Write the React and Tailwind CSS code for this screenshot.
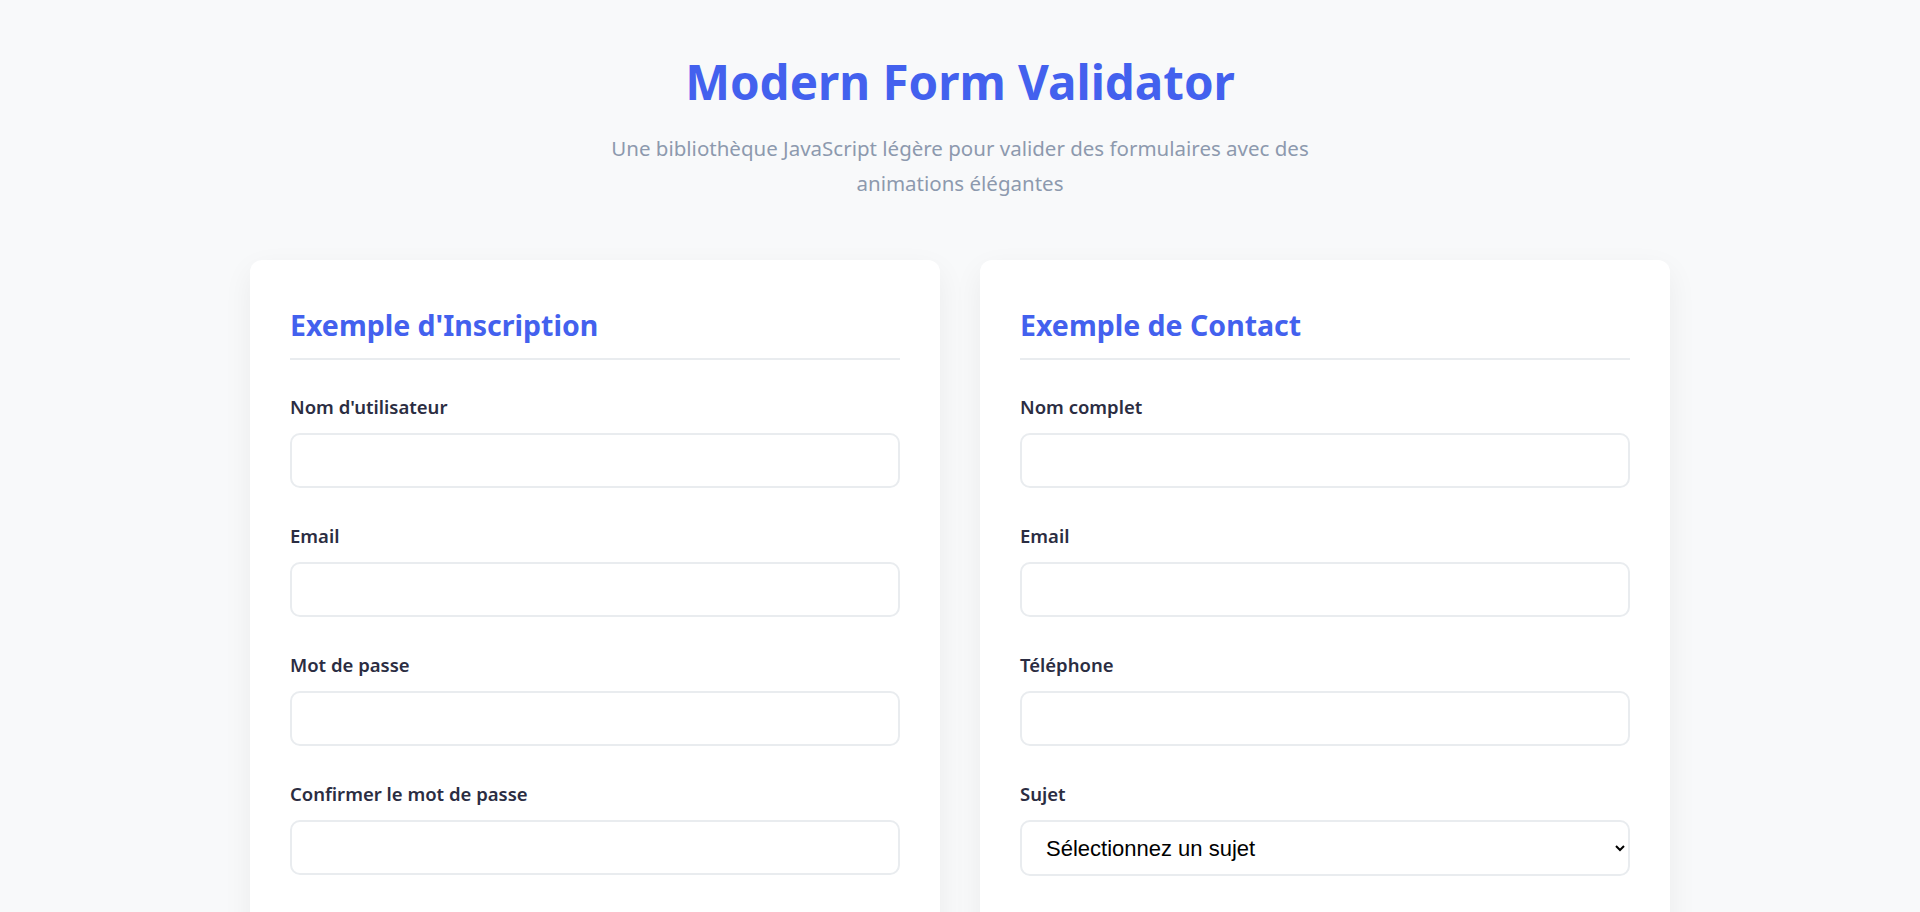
import { useState } from 'react'

const signupFields = [
  { id: 'username', label: "Nom d'utilisateur", type: 'text' },
  { id: 'email', label: 'Email', type: 'email' },
  { id: 'password', label: 'Mot de passe', type: 'password' },
  { id: 'confirm', label: 'Confirmer le mot de passe', type: 'password' },
  { id: 'age', label: 'Âge', type: 'number' },
]

const contactFields = [
  { id: 'fullname', label: 'Nom complet', type: 'text' },
  { id: 'contact-email', label: 'Email', type: 'email' },
  { id: 'phone', label: 'Téléphone', type: 'tel' },
]

function Field({ field, value, onChange }) {
  return (
    <div className="mb-[34px]">
      <label htmlFor={field.id} className="mb-3 block text-[18.5px] font-semibold leading-[28px] text-[#2b2d42]">
        {field.label}
      </label>
      <input
        id={field.id}
        type={field.type}
        value={value}
        onChange={(event) => onChange(field.id, event.target.value)}
        className="block h-[55px] w-full rounded-[10px] border-2 border-[#e9ecef] bg-white px-4 text-[16px] text-[#2b2d42] outline-none"
      />
    </div>
  )
}

function Card({ title, children }) {
  return (
    <section className="rounded-xl bg-white p-10 shadow-[0_10px_30px_rgba(0,0,0,0.06)]">
      <h2 className="mb-[33px] border-b-2 border-[#e9ecef] pb-2 text-[28.5px] font-bold leading-[50px] text-[#4361ee]">
        {title}
      </h2>
      {children}
    </section>
  )
}

export default function App() {
  const [values, setValues] = useState({})

  const updateValue = (id, value) => {
    setValues((prev) => ({ ...prev, [id]: value }))
  }

  return (
    <div className="min-h-screen bg-[#f8f9fa] pb-16 font-['Noto_Sans','Open_Sans',sans-serif]">
      <header className="pt-[52px] text-center">
        <h1 className="text-[47.5px] font-bold leading-[60px] text-[#4361ee]">Modern Form Validator</h1>
        <p className="mt-[19px] text-[20.5px] leading-[35px] text-[#8d99ae]">
          Une bibliothèque JavaScript légère pour valider des formulaires avec des
          <br />
          animations élégantes
        </p>
      </header>

      <main className="mx-auto mt-[59px] grid w-[1420px] grid-cols-2 items-start gap-10">
        <Card title="Exemple d'Inscription">
          <form onSubmit={(event) => event.preventDefault()}>
            {signupFields.map((field) => (
              <Field key={field.id} field={field} value={values[field.id] || ''} onChange={updateValue} />
            ))}
            <button
              type="submit"
              className="h-[55px] w-full rounded-[10px] bg-[#4361ee] text-[17px] font-semibold text-white"
            >
              S'inscrire
            </button>
          </form>
        </Card>

        <Card title="Exemple de Contact">
          <form onSubmit={(event) => event.preventDefault()}>
            {contactFields.map((field) => (
              <Field key={field.id} field={field} value={values[field.id] || ''} onChange={updateValue} />
            ))}
            <div className="mb-[34px]">
              <label htmlFor="subject" className="mb-3 block text-[18.5px] font-semibold leading-[28px] text-[#2b2d42]">
                Sujet
              </label>
              <select
                id="subject"
                value={values.subject || ''}
                onChange={(event) => updateValue('subject', event.target.value)}
                className="block h-[56px] w-full rounded-[10px] border-2 border-[#e9ecef] bg-white pl-[20px] pr-1 font-['Liberation_Sans',Arial,sans-serif] text-[22px] text-black outline-none"
              >
                <option value="">Sélectionnez un sujet</option>
                <option value="support">Support technique</option>
                <option value="sales">Commercial</option>
                <option value="other">Autre</option>
              </select>
            </div>
            <div className="mb-[34px]">
              <label htmlFor="message" className="mb-3 block text-[18.5px] font-semibold leading-[28px] text-[#2b2d42]">
                Message
              </label>
              <textarea
                id="message"
                rows={5}
                className="block w-full rounded-[10px] border-2 border-[#e9ecef] bg-white px-4 py-3 text-[16px] outline-none"
              />
            </div>
            <button
              type="submit"
              className="h-[55px] w-full rounded-[10px] bg-[#4361ee] text-[17px] font-semibold text-white"
            >
              Envoyer
            </button>
          </form>
        </Card>
      </main>
    </div>
  )
}
